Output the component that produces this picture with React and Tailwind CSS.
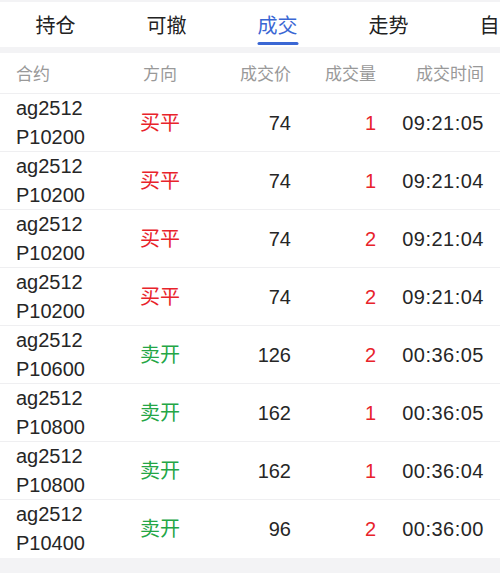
import React from "react";

const tabs = ["持仓", "可撤", "成交", "走势", "自选"];

const trades = [
  { code: "ag2512", strike: "P10200", side: "买平", price: 74, qty: 1, time: "09:21:05" },
  { code: "ag2512", strike: "P10200", side: "买平", price: 74, qty: 1, time: "09:21:04" },
  { code: "ag2512", strike: "P10200", side: "买平", price: 74, qty: 2, time: "09:21:04" },
  { code: "ag2512", strike: "P10200", side: "买平", price: 74, qty: 2, time: "09:21:04" },
  { code: "ag2512", strike: "P10600", side: "卖开", price: 126, qty: 2, time: "00:36:05" },
  { code: "ag2512", strike: "P10800", side: "卖开", price: 162, qty: 1, time: "00:36:05" },
  { code: "ag2512", strike: "P10800", side: "卖开", price: 162, qty: 1, time: "00:36:04" },
  { code: "ag2512", strike: "P10400", side: "卖开", price: 96, qty: 2, time: "00:36:00" },
];

const cols = "grid grid-cols-[104px_80px_91px_85px_108px] px-4 items-center";

export default function App() {
  const active = 2;

  return (
    <div
      className="w-[500px] h-[573px] overflow-hidden bg-[#f3f3f5] pt-[2px]"
      style={{ fontFamily: '"Liberation Sans", "Noto Sans CJK SC", sans-serif' }}
    >
      {/* Tabs */}
      <div className="bg-white h-[45px] flex overflow-hidden">
        {tabs.map((t, i) => (
          <div key={t} className="relative w-[111px] shrink-0 flex justify-center">
            <span
              className={`mt-[11px] text-[20px] leading-[26px] whitespace-nowrap ${
                i === active ? "text-[#3a67d4]" : "text-[#222]"
              }`}
            >
              {t}
            </span>
            {i === active && (
              <div className="absolute left-1/2 -translate-x-1/2 top-[40px] w-[41px] h-[3px] rounded-full bg-[#3a67d4]" />
            )}
          </div>
        ))}
      </div>

      {/* Table */}
      <div className="mt-[6px] bg-white">
        <div className={`${cols} h-[41px] pt-[4px] border-b border-[#efeff1] text-[17px] text-[#999]`}>
          <span>合约</span>
          <span className="text-center">方向</span>
          <span className="text-right">成交价</span>
          <span className="text-right">成交量</span>
          <span className="text-right">成交时间</span>
        </div>

        {trades.map((r, i) => (
          <div
            key={i}
            className={`${cols} h-[58px] text-[20px] text-[#262626] ${
              i < trades.length - 1 ? "border-b border-[#efeff1]" : ""
            }`}
          >
            <div className="leading-[29px]">
              <div>{r.code}</div>
              <div>{r.strike}</div>
            </div>
            <span className={`text-center ${r.side === "买平" ? "text-[#e8232b]" : "text-[#24a646]"}`}>
              {r.side}
            </span>
            <span className="text-right">{r.price}</span>
            <span className="text-right text-[#e8232b]">{r.qty}</span>
            <span className="text-right tracking-[0.5px]">{r.time}</span>
          </div>
        ))}
      </div>
    </div>
  );
}
